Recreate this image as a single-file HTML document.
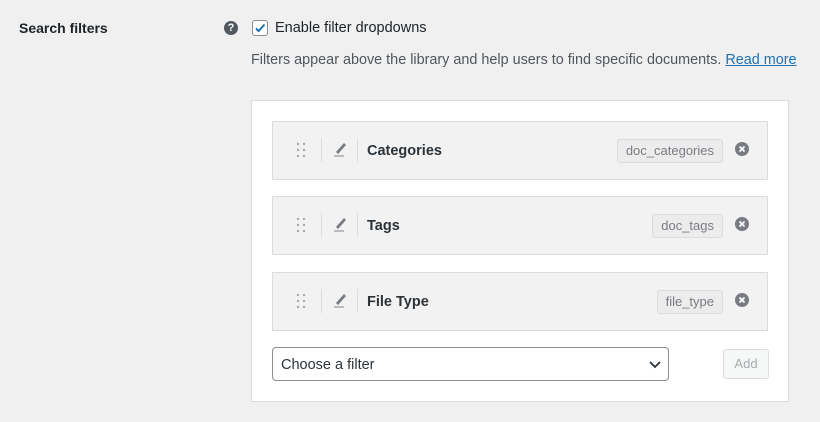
<!DOCTYPE html>
<html><head><style>
body{margin:0;width:820px;height:422px;background:#f0f0f1;font-family:"Liberation Sans",sans-serif;color:#1d2327;position:relative;overflow:hidden;font-size:14px}
.a{position:absolute}
.row{position:absolute;left:272px;width:494px;height:57px;background:#f2f2f2;border:1px solid #dcdcde}
.row .t{position:absolute;left:94px;top:21px;font-weight:bold;font-size:14.5px;color:#2c3338}
.row .sep{position:absolute;top:16px;width:1px;height:24px;background:#dcdcde}
.row .dots{position:absolute;left:23px;top:20px}
.row .pen{position:absolute;left:59px;top:18px}
.tag{position:absolute;top:17px;height:22px;line-height:22px;padding:0 8px;border:1px solid #dcdcde;background:#ececec;border-radius:3px;color:#787c82;font-size:13px}
.x{position:absolute;left:462px;top:20px;width:14px;height:14px;border-radius:50%;background:#787c82}
</style></head><body>
<div class="a" style="left:19px;top:20px;font-weight:bold;font-size:14px">Search filters</div>
<div class="a" style="left:224px;top:21px;width:14px;height:14px;border-radius:50%;background:#50575e;color:#fff;font-size:11px;font-weight:bold;text-align:center;line-height:14px">?</div>
<div class="a" style="left:252px;top:20px;width:14px;height:14px;border:1px solid #8c8f94;border-radius:3px;background:#fff">
<svg width="14" height="14" viewBox="0 0 14 14"><path d="M3 7.5l2.6 2.6L11.5 3.5" stroke="#2271b1" stroke-width="2" fill="none"/></svg></div>
<div class="a" style="left:275px;top:20px;font-size:14.5px">Enable filter dropdowns</div>
<div class="a" style="left:251px;top:52px;font-size:14.4px;color:#50575e">Filters appear above the library and help users to find specific documents. <span style="color:#2271b1;text-decoration:underline">Read more</span></div>
<div class="a" style="left:251px;top:100px;width:536px;height:300px;background:#fff;border:1px solid #dcdcde"></div>

<div class="row" style="top:121px"><svg class="dots" width="10" height="16"><g fill="#a7aaad"><circle cx="2" cy="2" r="1.2"/><circle cx="8" cy="2" r="1.2"/><circle cx="2" cy="8" r="1.2"/><circle cx="8" cy="8" r="1.2"/><circle cx="2" cy="14" r="1.2"/><circle cx="8" cy="14" r="1.2"/></g></svg><div class="sep" style="left:48px"></div><svg class="pen" width="16" height="18"><path d="M4 12L12 3l2 2-8 9z" fill="#787c82"/><path d="M2 16h10" stroke="#a7aaad" stroke-width="1.5"/></svg><div class="sep" style="left:84px"></div><div class="t">Categories</div><div class="tag" style="right:44px">doc_categories</div><div class="x"><svg width="14" height="14"><path d="M4.5 4.5l5 5M9.5 4.5l-5 5" stroke="#fff" stroke-width="1.8"/></svg></div></div>

<div class="row" style="top:196px"><svg class="dots" width="10" height="16"><g fill="#a7aaad"><circle cx="2" cy="2" r="1.2"/><circle cx="8" cy="2" r="1.2"/><circle cx="2" cy="8" r="1.2"/><circle cx="8" cy="8" r="1.2"/><circle cx="2" cy="14" r="1.2"/><circle cx="8" cy="14" r="1.2"/></g></svg><div class="sep" style="left:48px"></div><svg class="pen" width="16" height="18"><path d="M4 12L12 3l2 2-8 9z" fill="#787c82"/><path d="M2 16h10" stroke="#a7aaad" stroke-width="1.5"/></svg><div class="sep" style="left:84px"></div><div class="t">Tags</div><div class="tag" style="right:44px">doc_tags</div><div class="x"><svg width="14" height="14"><path d="M4.5 4.5l5 5M9.5 4.5l-5 5" stroke="#fff" stroke-width="1.8"/></svg></div></div>

<div class="row" style="top:272px"><svg class="dots" width="10" height="16"><g fill="#a7aaad"><circle cx="2" cy="2" r="1.2"/><circle cx="8" cy="2" r="1.2"/><circle cx="2" cy="8" r="1.2"/><circle cx="8" cy="8" r="1.2"/><circle cx="2" cy="14" r="1.2"/><circle cx="8" cy="14" r="1.2"/></g></svg><div class="sep" style="left:48px"></div><svg class="pen" width="16" height="18"><path d="M4 12L12 3l2 2-8 9z" fill="#787c82"/><path d="M2 16h10" stroke="#a7aaad" stroke-width="1.5"/></svg><div class="sep" style="left:84px"></div><div class="t">File Type</div><div class="tag" style="right:44px">file_type</div><div class="x"><svg width="14" height="14"><path d="M4.5 4.5l5 5M9.5 4.5l-5 5" stroke="#fff" stroke-width="1.8"/></svg></div></div>

<div class="a" style="left:272px;top:347px;width:395px;height:32px;border:1px solid #8c8f94;border-radius:4px;background:#fff"><span class="a" style="left:8px;top:9px;font-size:14.5px;color:#2c3338">Choose a filter</span><svg class="a" style="left:376px;top:13px" width="12" height="8"><path d="M1 1l5 5 5-5" stroke="#2c3338" stroke-width="1.8" fill="none"/></svg></div>
<div class="a" style="left:723px;top:349px;width:44px;height:28px;border:1px solid #dcdcde;border-radius:3px;background:#f6f7f7;color:#a7aaad;text-align:center;line-height:28px;font-size:13px">Add</div>
</body></html>
